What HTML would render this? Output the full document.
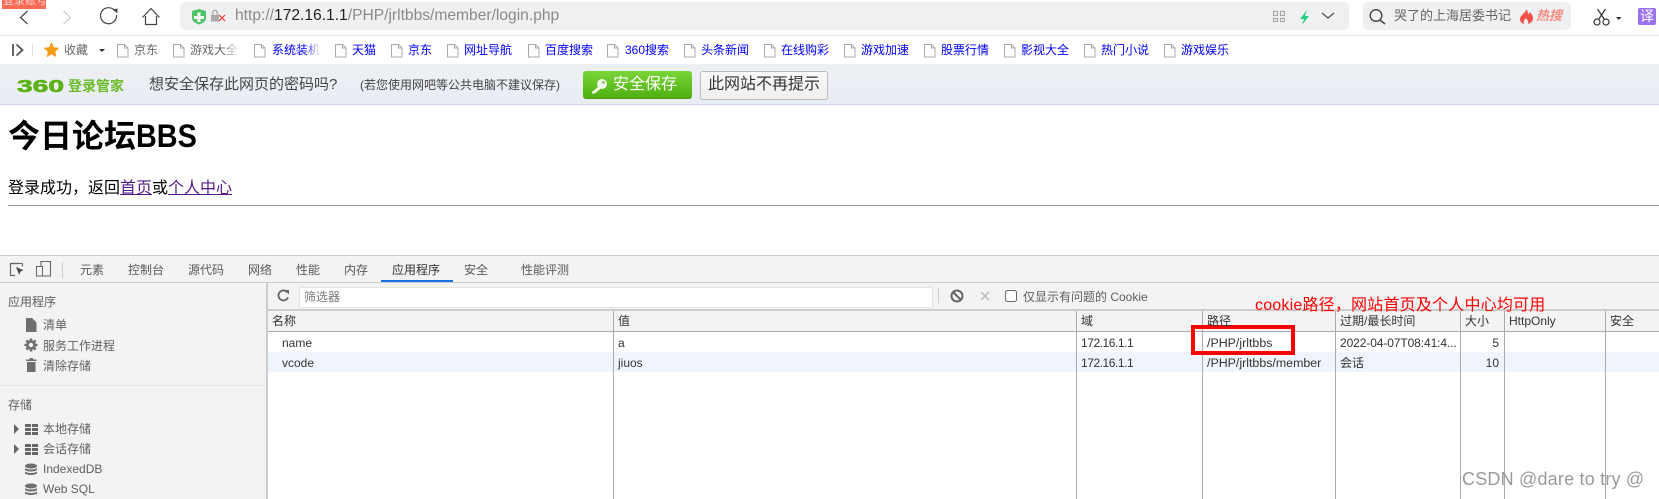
<!DOCTYPE html>
<html lang="zh-CN"><head><meta charset="utf-8"><title>login</title>
<style>
html,body{margin:0;padding:0;background:#fff}
#r{position:relative;width:1659px;height:499px;overflow:hidden;background:#fff;font-family:"Liberation Sans","Noto Sans CJK SC",sans-serif;font-size:12px;color:#333}
.b{position:absolute}
.t{position:absolute;white-space:nowrap;line-height:20px;height:20px}
.bm{color:#00f}
.tab{color:#5a5a5a}
.s{color:#5f5f5f}
.c{color:#333}
svg{position:absolute;left:0;top:0}
a{color:#551a8b;text-decoration:underline}
</style></head><body><div id="r">
<!-- backgrounds -->
<div class="b" style="left:0;top:35px;width:1659px;height:1px;background:#e9e9e9"></div>
<div class="b" style="left:180px;top:2px;width:1169px;height:28px;background:#eff0f2;border-radius:5px"></div>
<div class="b" style="left:1363px;top:2px;width:208px;height:28px;background:#eff0f2;border-radius:5px"></div>
<div class="b" style="left:0;top:64px;width:1659px;height:40px;background:linear-gradient(#edf0f2,#e9edf5);border-bottom:1px solid #cdd6ec"></div>
<div class="b" style="left:583px;top:71px;width:109px;height:27px;background:linear-gradient(#7ad538,#4fb012);border-radius:3px;border-bottom:1px solid #4a9a12"></div>
<div class="b" style="left:700px;top:71px;width:126px;height:27px;background:linear-gradient(#fafafa,#efefef);border-radius:3px;border:1px solid #bbb"></div>
<div class="b" style="left:8px;top:205px;width:1651px;height:1px;background:#999"></div>
<div class="b" style="left:0;top:255px;width:1659px;height:28px;background:#f3f3f3;border-top:1px solid #ccc;border-bottom:1px solid #ccc;box-sizing:border-box"></div>
<div class="b" style="left:381px;top:280px;width:72px;height:2px;background:#1a73e8"></div>
<div class="b" style="left:0;top:283px;width:266px;height:216px;background:#f3f3f3"></div>
<div class="b" style="left:266px;top:283px;width:2px;height:216px;background:#ccc"></div>
<div class="b" style="left:0;top:385px;width:266px;height:1px;background:#e4e4e4"></div>
<div class="b" style="left:268px;top:283px;width:1391px;height:26px;background:#f3f3f3"></div>
<div class="b" style="left:299px;top:287px;width:632px;height:19px;background:#fff;border:1px solid #e3e3e3"></div>
<div class="b" style="left:268px;top:309px;width:1391px;height:2px;background:#ccc"></div>
<div class="b" style="left:268px;top:311px;width:1391px;height:20px;background:#f3f3f3;border-bottom:1px solid #aaa;box-sizing:content-box"></div>
<div class="b" style="left:268px;top:352px;width:1391px;height:20px;background:#f0f5fd"></div>
<div class="b" style="left:613px;top:311px;width:1px;height:188px;background:#aaa"></div>
<div class="b" style="left:1076px;top:311px;width:1px;height:188px;background:#aaa"></div>
<div class="b" style="left:1202px;top:311px;width:1px;height:188px;background:#aaa"></div>
<div class="b" style="left:1335px;top:311px;width:1px;height:188px;background:#aaa"></div>
<div class="b" style="left:1460px;top:311px;width:1px;height:188px;background:#aaa"></div>
<div class="b" style="left:1504px;top:311px;width:1px;height:188px;background:#aaa"></div>
<div class="b" style="left:1605px;top:311px;width:1px;height:188px;background:#aaa"></div>

<!-- icons -->
<svg width="1659" height="499" viewBox="0 0 1659 499">
<g fill="none" stroke="#444" stroke-width="1.200">
<path d="M27.500 11l-7 6.500 7 6.500"/>
<path stroke="#ccc" d="M63.500 11l7 6.500-7 6.500"/>
<path d="M116.500 15a8 8 0 1 1-1.500-4"/>
<path d="M142.500 17.500l8.500-9 8.500 9M145.500 16v8.500h11V16"/>
</g>
<path d="M113 9.500l4.500-1v5z" fill="#444"/>
<path d="M192 11l7-2 7 2v7c0 3-3 5-7 6.500-4-1.500-7-3.500-7-6.500z" fill="#4fc46b"/>
<path d="M197.500 12.500h3v3.500h3.500v3h-3.500v3h-3v-3H194v-3h3.500z" fill="#fff"/>
<rect x="211" y="15" width="8" height="6.500" fill="#aaa"/><path d="M212.800 15v-2.500a2.200 2.200 0 0 1 4.400 0v2.500" fill="none" stroke="#aaa" stroke-width="1.300"/>
<path d="M219 15l6 6M225 15l-6 6" stroke="#e33" stroke-width="1.200"/>
<g fill="none" stroke="#aaa" stroke-width="1.200"><rect x="1273.500" y="11.500" width="4" height="4"/><rect x="1280.500" y="11.500" width="4" height="4"/><rect x="1273.500" y="18.500" width="4" height="3"/><rect x="1280.500" y="18.500" width="4" height="3"/></g>
<path d="M1307 10l-7 9h4l-2 6 7-9h-4z" fill="#22d07f"/>
<path d="M1322 13l6 5 6-5" fill="none" stroke="#555" stroke-width="1.400"/>
<circle cx="1376" cy="15.500" r="5.800" fill="none" stroke="#444" stroke-width="1.400"/><path d="M1380 20l5 4" stroke="#444" stroke-width="1.500"/>
<path d="M1526 9c1 3-6 6-6 10 0 3 2 4.500 4 5-1-2 0-4 2-6 1 2 3 3 2 6 3-1 5-3 5-6 0-3-2-4-3-6-1 1-1 2-2 2 0-2-1-4-2-5z" fill="#f5504a"/>
<g fill="none" stroke="#333" stroke-width="1.200"><circle cx="1597" cy="22" r="3"/><circle cx="1606" cy="22" r="3"/><path d="M1598.500 19.500l7-10.500M1604.500 19.500l-7-10.500"/></g>
<path d="M1616 17h5.500l-2.750 3z" fill="#333"/>
<rect x="1638" y="8" width="18" height="17" rx="2" fill="#9a70f5"/>
<path d="M13 44v12" stroke="#666" stroke-width="2"/><path d="M16.500 44.500l6 5.500-6 5.500" fill="none" stroke="#555" stroke-width="1.800"/>
<path d="M32.500 44v12" stroke="#ddd"/>
<path d="M51.500 42l2.300 5.300 5.600.600-4.200 3.800 1.200 5.600-4.900-2.900-4.900 2.900 1.200-5.600-4.200-3.800 5.600-.600z" fill="#f59a1b"/>
<path d="M99 49h6l-3 3z" fill="#333"/>
<g fill="#fff" stroke="#aaa">
<path d="M117.500 44.500h7l3.500 3.500v9h-10.500zM124.500 44.500v3.500h3.500"/>
<path d="M173.500 44.500h7l3.500 3.500v9h-10.500zM180.500 44.500v3.500h3.500"/>
<path d="M254.500 44.500h7l3.500 3.500v9h-10.500zM261.500 44.500v3.500h3.500"/>
<path d="M335.500 44.500h7l3.500 3.500v9h-10.500zM342.500 44.500v3.500h3.500"/>
<path d="M391.500 44.500h7l3.500 3.500v9h-10.500zM398.500 44.500v3.500h3.500"/>
<path d="M447.500 44.500h7l3.500 3.500v9h-10.500zM454.500 44.500v3.500h3.500"/>
<path d="M528.500 44.500h7l3.500 3.500v9h-10.500zM535.500 44.500v3.500h3.500"/>
<path d="M607.500 44.500h7l3.500 3.500v9h-10.500zM614.500 44.500v3.500h3.500"/>
<path d="M684.500 44.500h7l3.500 3.500v9h-10.500zM691.500 44.500v3.500h3.500"/>
<path d="M764.500 44.500h7l3.500 3.500v9h-10.500zM771.500 44.500v3.500h3.500"/>
<path d="M844.500 44.500h7l3.500 3.500v9h-10.500zM851.500 44.500v3.500h3.500"/>
<path d="M924.500 44.500h7l3.500 3.500v9h-10.500zM931.500 44.500v3.500h3.500"/>
<path d="M1004.500 44.500h7l3.500 3.500v9h-10.500zM1011.500 44.500v3.500h3.500"/>
<path d="M1084.500 44.500h7l3.500 3.500v9h-10.500zM1091.500 44.500v3.500h3.500"/>
<path d="M1164.500 44.500h7l3.500 3.500v9h-10.500zM1171.500 44.500v3.500h3.500"/>
</g>
<circle cx="602" cy="84" r="5" fill="#f2f6ee"/><circle cx="603.500" cy="82.500" r="1.300" fill="#6cc52e"/><path d="M599 86l-7 6v1.500h3l1-1.200 1.200-.200.300-1.300 1.300-.300 2.700-3z" fill="#f2f6ee"/>
<g fill="none" stroke="#666" stroke-width="1.200"><path d="M18 263.500h-7.500v12H15"/><path d="M22.500 263.500v3"/><path d="M10.500 263.500h12"/></g><path d="M16 267l7.500 3.200-3 1.300-1.300 3.300z" fill="#444"/>
<path d="M36.500 266.500h6v9.500h-6z" fill="none" stroke="#666"/><path d="M41 266v-4.500h9.500V276h-8" fill="none" stroke="#666" stroke-width="1.100"/>
<path d="M62.500 262v16" stroke="#ccc"/>
<path d="M26 318h6l4.500 4.500V332H26z" fill="#6e6e6e"/>
<path d="M31 338.500v13M24.500 345h13M26.400 340.400l9.200 9.200M35.600 340.400l-9.200 9.200" stroke="#6e6e6e" stroke-width="2.600"/><circle cx="31" cy="345" r="4.800" fill="#6e6e6e"/><circle cx="31" cy="345" r="2.200" fill="#f3f3f3"/>
<path d="M26 359.500h10.500V361H26zM27 362h8.500v10H27zM29.500 358h3.500v1.500h-3.500z" fill="#6e6e6e"/>
<path d="M14 424l5 5-5 5zM14 444l5 5-5 5z" fill="#666"/>
<g fill="#666"><rect x="25" y="424" width="6" height="3"/><rect x="32" y="424" width="6" height="3"/><rect x="25" y="428" width="6" height="3"/><rect x="32" y="428" width="6" height="3"/><rect x="25" y="432" width="6" height="3"/><rect x="32" y="432" width="6" height="3"/><rect x="25" y="444" width="6" height="3"/><rect x="32" y="444" width="6" height="3"/><rect x="25" y="448" width="6" height="3"/><rect x="32" y="448" width="6" height="3"/><rect x="25" y="452" width="6" height="3"/><rect x="32" y="452" width="6" height="3"/></g>
<g fill="#6e6e6e"><ellipse cx="31" cy="466" rx="6" ry="2.500"/><path d="M25 468c2 2 10 2 12 0v2c-2 2-10 2-12 0zM25 471.500c2 2 10 2 12 0v2c-2 2-10 2-12 0z"/><ellipse cx="31" cy="486" rx="6" ry="2.500"/><path d="M25 488c2 2 10 2 12 0v2c-2 2-10 2-12 0zM25 491.500c2 2 10 2 12 0v2c-2 2-10 2-12 0z"/></g>
<path d="M287.500 292.500a5 5 0 1 0 .5 5" fill="none" stroke="#666" stroke-width="1.800"/><path d="M284.500 290h4.500v4.500z" fill="#666"/>
<path d="M938.500 288v15" stroke="#ccc"/>
<circle cx="957" cy="296" r="5.500" fill="none" stroke="#666" stroke-width="2"/><path d="M953 292l8 8" stroke="#666" stroke-width="2"/>
<path d="M981 292l8 8M989 292l-8 8" stroke="#bbb" stroke-width="1.500"/>
<rect x="1005.500" y="290.500" width="11" height="11" rx="2" fill="#fff" stroke="#666"/>
<rect x="1193" y="327" width="100" height="26" fill="none" stroke="#f00" stroke-width="4"/>
</svg>

<!-- top chrome text -->
<div class="b" style="left:2px;top:0;width:44px;height:9px;background:#fa6a55;overflow:hidden"><span style="position:absolute;left:1px;top:-6px;color:#ffd9d2;font-size:11px;line-height:14px;white-space:nowrap">登录账号</span></div>
<div class="t" style="left:235px;top:6px;font-size:15.600px;color:#8a8a8a">http://<span style="color:#222">172.16.1.1</span>/PHP/jrltbbs/member/login.php</div>
<div class="t" style="left:1394px;top:6px;font-size:13px;color:#666">哭了的上海居委书记</div>
<div class="t" style="left:1536px;top:6px;font-size:13px;font-weight:bold;font-style:italic;color:#f98b80">热搜</div>
<div class="t" style="left:1640px;top:6px;font-size:14px;color:#fff">译</div>

<!-- bookmarks -->
<div class="t" style="left:64px;top:40px;color:#666">收藏</div>
<div class="t" style="left:134px;top:40px;color:#666">京东</div>
<div class="t" style="left:190px;top:40px;color:#666">游戏大全</div>
<div class="b" style="left:222px;top:42px;width:18px;height:16px;background:linear-gradient(90deg,rgba(255,255,255,0),#fff)"></div>
<div class="t bm" style="left:272px;top:40px">系统装机</div>
<div class="b" style="left:304px;top:42px;width:17px;height:16px;background:linear-gradient(90deg,rgba(255,255,255,0),#fff)"></div>
<div class="t bm" style="left:352px;top:40px">天猫</div>
<div class="t bm" style="left:408px;top:40px">京东</div>
<div class="t bm" style="left:464px;top:40px">网址导航</div>
<div class="t bm" style="left:545px;top:40px">百度搜索</div>
<div class="t bm" style="left:625px;top:40px">360搜索</div>
<div class="t bm" style="left:701px;top:40px">头条新闻</div>
<div class="t bm" style="left:781px;top:40px">在线购彩</div>
<div class="t bm" style="left:861px;top:40px">游戏加速</div>
<div class="t bm" style="left:941px;top:40px">股票行情</div>
<div class="t bm" style="left:1021px;top:40px">影视大全</div>
<div class="t bm" style="left:1101px;top:40px">热门小说</div>
<div class="t bm" style="left:1181px;top:40px">游戏娱乐</div>

<!-- infobar -->
<div class="t" style="left:17px;top:75.500px;font-size:17.500px;font-weight:bold;color:#5cb215;-webkit-text-stroke:.6px #5cb215;transform:scaleX(1.610);transform-origin:left">360</div>
<div class="t" style="left:68px;top:76px;font-size:14px;font-weight:bold;color:#6cbc2a">登录管家</div>
<div class="t" style="left:149px;top:75px;font-size:15px;color:#444">想安全保存此网页的密码吗?</div>
<div class="t" style="left:360px;top:75px;font-size:12px;color:#444">(若您使用网吧等公共电脑不建议保存)</div>
<div class="t" style="left:613px;top:75px;font-size:16px;color:#fff">安全保存</div>
<div class="t" style="left:708px;top:75px;font-size:16px;color:#333">此网站不再提示</div>

<!-- page -->
<div class="t" style="left:8px;top:120px;height:32px;line-height:32px;font-size:32px;font-weight:bold;color:#000">今日论坛<span style="display:inline-block;transform:scaleX(.9);transform-origin:left">BBS</span></div>
<div class="t" style="left:8px;top:179px;font-size:16px;color:#000">登录成功，返回<a>首页</a>或<a>个人中心</a></div>

<!-- tabs -->
<div class="t tab" style="left:80px;top:260px">元素</div>
<div class="t tab" style="left:128px;top:260px">控制台</div>
<div class="t tab" style="left:188px;top:260px">源代码</div>
<div class="t tab" style="left:248px;top:260px">网络</div>
<div class="t tab" style="left:296px;top:260px">性能</div>
<div class="t tab" style="left:344px;top:260px">内存</div>
<div class="t" style="left:392px;top:260px;color:#333">应用程序</div>
<div class="t tab" style="left:464px;top:260px">安全</div>
<div class="t tab" style="left:521px;top:260px">性能评测</div>

<!-- sidebar -->
<div class="t s" style="left:8px;top:292px">应用程序</div>
<div class="t s" style="left:43px;top:315px">清单</div>
<div class="t s" style="left:43px;top:336px">服务工作进程</div>
<div class="t s" style="left:43px;top:356px">清除存储</div>
<div class="t s" style="left:8px;top:395px">存储</div>
<div class="t s" style="left:43px;top:419px">本地存储</div>
<div class="t s" style="left:43px;top:439px">会话存储</div>
<div class="t s" style="left:43px;top:459px">IndexedDB</div>
<div class="t s" style="left:43px;top:479px">Web SQL</div>

<!-- toolbar -->
<div class="t" style="left:304px;top:287px;color:#777">筛选器</div>
<div class="t s" style="left:1023px;top:287px">仅显示有问题的 Cookie</div>

<!-- table -->
<div class="t c" style="left:272px;top:311px">名称</div>
<div class="t c" style="left:618px;top:311px">值</div>
<div class="t c" style="left:1081px;top:311px">域</div>
<div class="t c" style="left:1207px;top:311px">路径</div>
<div class="t c" style="left:1340px;top:311px">过期/最长时间</div>
<div class="t c" style="left:1465px;top:311px">大小</div>
<div class="t c" style="left:1509px;top:311px">HttpOnly</div>
<div class="t c" style="left:1610px;top:311px">安全</div>
<div class="t c" style="left:282px;top:333px">name</div>
<div class="t c" style="left:618px;top:333px">a</div>
<div class="t c" style="left:1081px;top:333px;letter-spacing:-.45px">172.16.1.1</div>
<div class="t c" style="left:1207px;top:333px;font-size:12.400px">/PHP/jrltbbs</div>
<div class="t c" style="left:1340px;top:333px;letter-spacing:-.1px">2022-04-07T08:41:4...</div>
<div class="t c" style="left:1460px;top:333px;width:39px;text-align:right">5</div>
<div class="t c" style="left:282px;top:353px">vcode</div>
<div class="t c" style="left:618px;top:353px">jiuos</div>
<div class="t c" style="left:1081px;top:353px;letter-spacing:-.45px">172.16.1.1</div>
<div class="t c" style="left:1207px;top:353px;font-size:12.400px">/PHP/jrltbbs/member</div>
<div class="t c" style="left:1340px;top:353px">会话</div>
<div class="t c" style="left:1460px;top:353px;width:39px;text-align:right">10</div>

<!-- annotations -->
<div class="t" style="left:1255px;top:296px;font-size:16px;color:#f00;letter-spacing:.2px">cookie路径，网站首页及个人中心均可用</div>
<div class="t" style="left:1462px;top:469px;font-size:18px;color:#9a9a9a;letter-spacing:.2px">CSDN @dare to try @</div>
</div></body></html>
